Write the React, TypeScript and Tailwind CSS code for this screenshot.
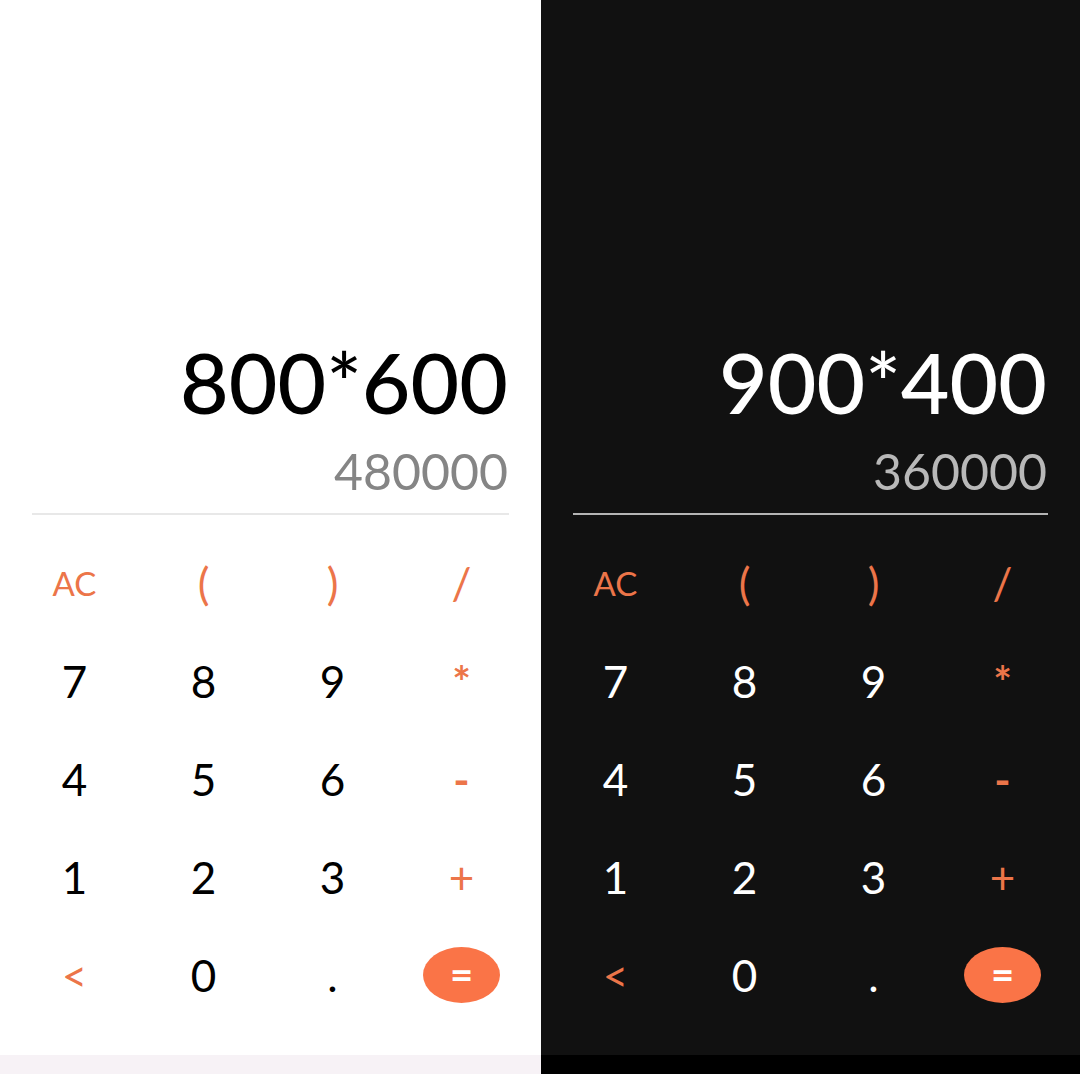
import React from "react";

type Kind = "ac" | "op" | "num" | "eq";
const keys: [string, Kind][] = [
  ["AC", "ac"], ["(", "op"], [")", "op"], ["/", "op"],
  ["7", "num"], ["8", "num"], ["9", "num"], ["*", "op"],
  ["4", "num"], ["5", "num"], ["6", "num"], ["-", "op"],
  ["1", "num"], ["2", "num"], ["3", "num"], ["+", "op"],
  ["<", "op"], ["0", "num"], [".", "num"], ["=", "eq"],
];

function Panel({ dark, expr, result }: { dark: boolean; expr: string; result: string }) {
  return (
    <div className={`flex flex-col h-[1074px] ${dark ? "w-[539px] bg-[#111111]" : "w-[541px] bg-white"}`}>
      <div className="flex-1 flex flex-col justify-end pb-[31px]">
        <div className="px-[33px] flex flex-col items-end">
          <div className={`text-[84px] leading-none font-medium ${dark ? "text-white" : "text-black"}`}>{expr}</div>
          <div className={`text-[50px] leading-none mt-[22px] ${dark ? "text-[#b8b8b8]" : "text-[#858585]"}`}>{result}</div>
        </div>
        <div className={`mt-[17px] mx-[32px] h-[2px] ${dark ? "bg-[#b5b5b5]" : "bg-[#e8e8e8]"}`} />
        <div className="mt-[19px] ml-[10px] w-[516px] grid grid-cols-4">
          {keys.map(([k, kind]) => (
            <div key={k} className="h-[98px] flex items-center justify-center">
              {kind === "eq" ? (
                <div className="w-[77px] h-[56px] rounded-[50%] bg-[#fa7447] flex items-center justify-center text-white text-[40px] font-bold leading-none pb-[2px]">
                  =
                </div>
              ) : kind === "ac" ? (
                <span className="text-[33px] leading-none text-[#ec7549]">AC</span>
              ) : kind === "op" ? (
                <span className={`text-[44px] leading-none text-[#ec7549] ${k === "*" || k === "-" ? "font-bold" : ""}`}>{k}</span>
              ) : (
                <span className={`text-[44px] leading-none ${dark ? "text-white" : "text-black"}`}>{k}</span>
              )}
            </div>
          ))}
        </div>
      </div>
      <div className={`h-[19px] ${dark ? "bg-black" : "bg-[#f7f2f6]"}`} />
    </div>
  );
}

export default function App() {
  return (
    <div className="w-[1080px] h-[1076px] bg-white flex items-start" style={{ fontFamily: "Lato, 'Open Sans', sans-serif" }}>
      <Panel dark={false} expr="800*600" result="480000" />
      <Panel dark={true} expr="900*400" result="360000" />
    </div>
  );
}
